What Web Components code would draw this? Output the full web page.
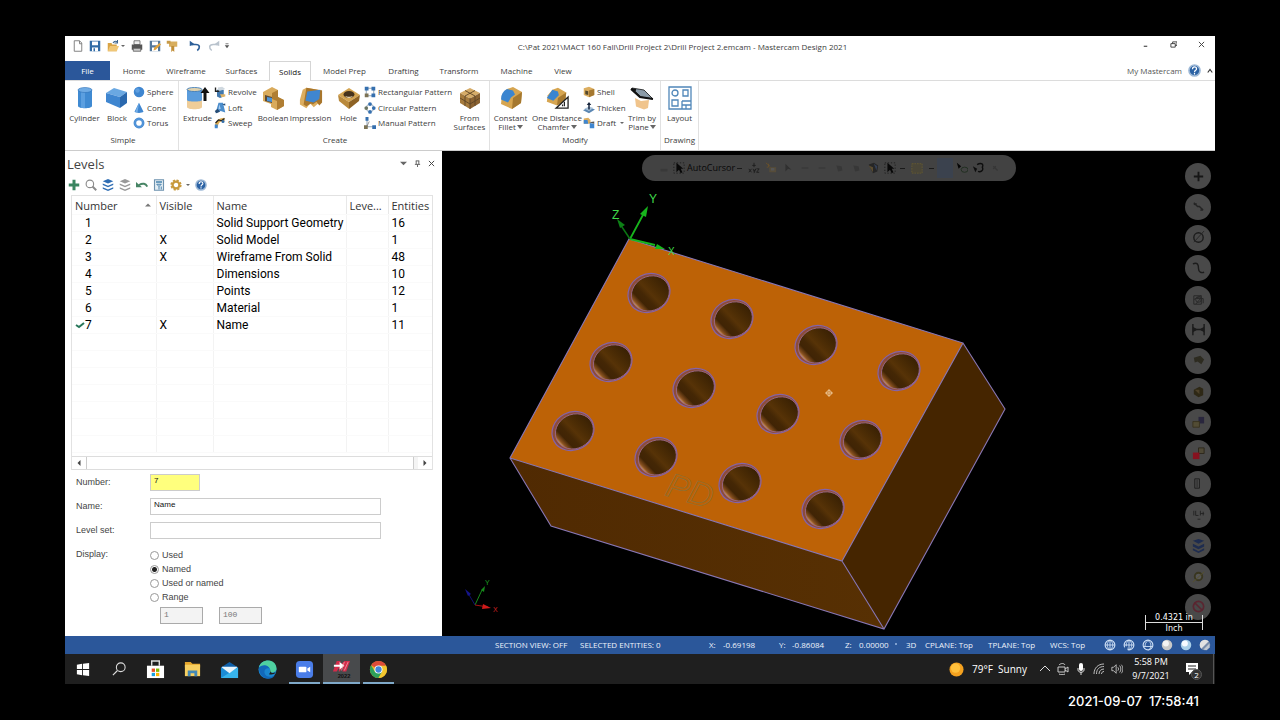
<!DOCTYPE html>
<html lang="en">
<head>
<meta charset="utf-8">
<title>Mastercam Design 2021</title>
<style>
html,body{margin:0;background:#000}
body{font-family:"Open Sans","Noto Sans",sans-serif;font-size:8px;color:#3c3c3c}
</style>
</head>
<body>
<mc-app></mc-app>
<script>
const box=(t,l,r,x='')=>`<path fill="${t}" d="M12 2l10 5-10 5.500L2 7z"/><path fill="${l}" d="M2 7l10 5.500V23L2 17z"/><path fill="${r}" d="M22 7l-10 5.500V23l10-6z"/>${x}`;
const globe='<circle cx="8" cy="8" r="6.500" fill="none" stroke="#cfe0f5" stroke-width="1.500"/><path d="M1.500 8h13M8 1.500v13M8 1.500c-5 4-5 9 0 13M8 1.500c5 4 5 9 0 13" fill="none" stroke="#cfe0f5" stroke-width="1.200"/>';
const ICONS={
// ribbon, large
cylinder:['0 0 24 24','<path fill="#3f8ad2" d="M5 4v16c0 3 14 3 14 0V4z"/><path fill="#5b9fe0" d="M8 5v17h4V5z"/><ellipse cx="12" cy="4" rx="7" ry="2.500" fill="#6fabe4" stroke="#2f72b8" stroke-width=".6"/>'],
block:['0 0 24 24','<path fill="#6aa8e2" d="M9 2l13 4-7 5L1 7z"/><path fill="#3f86d0" d="M1 7l14 4v11L1 16z"/><path fill="#2a68ae" d="M22 6l-7 5v11l7-5z"/>'],
extrude:['0 0 24 24','<path fill="#efcd98" d="M1 13v8c0 3 15 3 15 0v-8z"/><path fill="#5a9cdc" d="M1 3v11c0 2 15 2 15 0V3z"/><ellipse cx="8.500" cy="3.500" rx="7.500" ry="2" fill="#e2d3ae" stroke="#2f72b8" stroke-width=".8"/><path fill="#111" d="M19 1l4.500 6H20.500v8h-3V7H14.500z"/>'],
boolean:['0 0 24 24','<path fill="#d9ab5c" d="M2 6l9-5 6 3v7l6 3v6l-7 4-6-3v-3l-8-3z"/><path fill="#b07e33" d="M17 4v7l6 3v6l-7 4v-9l-5-2V7z"/><path fill="#5b4a35" d="M4 9l7 2v6l-7-2z"/><path fill="#4a94dc" d="M6 11l5 1v4l-5-1z"/>'],
impression:['0 0 26 24','<path fill="#dcae60" d="M1 14L4 3l4-2 17 3-3 4v9l-6 5-4-4-4 5-7-4z"/><path fill="#a8762c" d="M8 1l17 3v13l-3 3-3-4-4 3-2-1-5 3-3-2z"/><path fill="#3f86d0" d="M9 5l14-2-1 10-6 4-9-2z"/>'],
hole:['0 0 24 24','<path fill="#d4a552" d="M12 2l11 7-11 7L1 9z"/><path fill="#b9893c" d="M1 9l11 7v7L2 15z"/><path fill="#8e6324" d="M23 9l-11 7v7l10-8z"/><ellipse cx="12" cy="8.500" rx="5.500" ry="3.500" fill="#46331c"/><path fill="#f5e2bd" d="M8 10c2 2.500 6 2.500 8 0-2 1-6 1-8 0z"/>'],
from:['0 0 24 24',box('#d6ac68','#a57a3c','#8a6231','<path d="M7 4.500l10 5.500v10M17 4.500L7 10v10M2 12l10 6 10-6M12 12v11" fill="none" stroke="#5d4526" stroke-width=".9"/>')],
fillet:['0 0 24 24','<path fill="#d6a550" d="M8 3l6-2 9 5-1 11-9 6-11-5 1-9z"/><path fill="#a5782f" d="M23 6l-9 6-1 11 9-6z"/><path fill="#3a85d0" d="M8 3l6 1.500 2 4-4 3-3 5-7-3c0-5 2-8.500 6-10.500z"/>'],
chamfer:['0 0 26 24','<path fill="#d6a550" d="M8 3l6-2 9 5-1 9-9 5-11-4 1-7z"/><path fill="#a5782f" d="M23 6l-9 6-1 8 9-5z"/><path fill="#3a85d0" d="M8 3l6 2 1 4-6 6-7-3z"/><path fill="#fff" stroke="#222" stroke-width="1.400" d="M25 11v12H12z"/><path d="M21 16v5M19 19v2" stroke="#222" stroke-width="1.300"/>'],
trim:['0 0 24 24','<path fill="#f0c48c" d="M5 12l6 3 8-1-1 8-4 1.500-8-3z"/><path fill="#8b9ba8" stroke="#111" stroke-width=".8" d="M2 2l12 2 9 9-12-2z"/><path d="M1 3l5 1M1 3l9 8 13 2" stroke="#111" stroke-width="2" fill="none"/>'],
layout:['0 0 24 24','<g fill="none" stroke="#5087b9" stroke-width="1.300"><path d="M1 1h22v22H1z"/><circle cx="7" cy="7" r="3"/><path d="M15 4h5v6h-5zM4 14h6v6H4zM14 15h9M14 19h9M14 15v8M18 19v4"/></g>'],
// ribbon, small
sphere:['0 0 16 16','<circle cx="8" cy="8" r="7" fill="#3f86d0"/><circle cx="6" cy="6" r="3" fill="#5f9fe0"/>'],
cone:['0 0 16 16','<path fill="#3f86d0" d="M8 1l6 12c-2 2-10 2-12 0z"/><path fill="#76b0e8" d="M8 1L6 14l-3-1z"/>'],
torus:['0 0 16 16','<circle cx="8" cy="8" r="5.500" fill="none" stroke="#3f86d0" stroke-width="3.500"/><circle cx="8" cy="8" r="5.500" fill="none" stroke="#6ba8e4" stroke-width="1"/>'],
revolve:['0 0 16 16','<path fill="#4178ae" d="M4 5h9v9l-5 2-4-2z"/><path fill="#cfd8df" d="M5 2l6-1 4 3-9 3z"/><path d="M2 2v5h5" stroke="#222" stroke-width="1.800" fill="none"/><path fill="#e0b468" d="M8 11h7v3l-5 1z"/>'],
loft:['0 0 16 16','<path fill="#4b8dcc" d="M6 1h6l3 13-6-2-7 3z"/><path fill="#274d76" d="M1 12l4-3 3 4-5 2zM11 3l4-1v3z"/><path fill="#a9cdee" d="M7 3l2 6-3 1z"/>'],
sweep:['0 0 16 16','<path d="M3 13c1-8 4-9 11-10" stroke="#dba94c" stroke-width="4" fill="none"/><path d="M2 8l4-4 4 1M10 5l4-3" stroke="#222" stroke-width="1.600" fill="none"/><circle cx="12" cy="6" r="2" fill="#356ea8"/><path fill="#3f86d0" d="M1 10h4v5H1z"/>'],
rect:['0 0 16 16','<path d="M3 3h10v10H3z" fill="none" stroke="#6f8aa3"/><path fill="#356fae" d="M1 1h5v5H1zM10 1h5v5h-5zM10 10h5v5h-5z"/><path fill="#7c7355" d="M1 10h5v5H1z"/>'],
circ:['0 0 16 16','<circle cx="8" cy="8" r="5" fill="none" stroke="#7a94ab"/><g fill="#356fae"><circle cx="8" cy="2.800" r="2.500"/><circle cx="13" cy="8" r="2.500"/><circle cx="8" cy="13.200" r="2.500"/></g><circle cx="3" cy="8" r="2.500" fill="#6a7563"/>'],
manual:['0 0 16 16','<path d="M4 3v10h9" fill="none" stroke="#6f8aa3"/><path fill="#356fae" d="M2 0h4v5H2zM11 11h5v5h-5z"/><path fill="#7c7355" d="M0 11h5v5H0z"/><path d="M4 12L7 6" stroke="#777"/>'],
shell:['0 0 16 16','<path fill="#dcae60" d="M1 3l7-2 7 3v8l-7 3-7-3z"/><path fill="#a5782f" d="M8 6l7-2v8l-7 3z"/><path fill="#54482c" d="M3 6l4 1v5l-4-1z"/>'],
thicken:['0 0 16 16','<path fill="#5b87b3" d="M0 11l8-4 8 3-8 5z"/><path fill="#a9c2d8" d="M2 9l6-3 6 2-6 4z"/><path fill="#17253c" d="M8 0l3 4H9v6H7V4H5z"/>'],
draft:['0 0 16 16','<path fill="#dcae60" d="M1 2l6-1 3 3v5H1z"/><path fill="#3f86d0" d="M1 4h5l1 5H1zM9 8l6 1v6H9z"/><path fill="#555" d="M8 7l7-1v3z"/>'],
// quick access
new:['0 0 16 16','<path d="M3 1h7l3 3v11H3zM10 1v4h3" fill="#fff" stroke="#777" stroke-width="1.200"/>'],
save:['0 0 16 16','<path d="M1 1h14v14H1z" fill="#316ba5"/><path d="M4 2h8v5H4zM4 10h8v5H4z" fill="#fff"/><path d="M6 11h2v4H6z" fill="#316ba5"/>'],
open:['0 0 16 16','<path d="M1 4h5l1 2h6v9H1z" fill="#d9a445"/><path d="M4 8h12l-3 7H1z" fill="#f0c777"/><path d="M8 4c2-3 4-3 6-1M14 0v4h-4" stroke="#3c648d" stroke-width="1.400" fill="none"/>'],
print:['0 0 16 16','<path d="M4 1h8v5H4z" fill="#eee" stroke="#555"/><path d="M1 6h14v7H1z" fill="#555"/><path d="M3 11h10v4H3z" fill="#c9c9c9" stroke="#555"/>'],
saveas:['0 0 16 16','<path d="M1 1h14v14H1z" fill="#54789c"/><path d="M4 2h8v5H4zM4 10h8v5H4z" fill="#fff"/><path d="M6 14l1-4 7-6 2 2-7 7z" fill="#dfa23d"/>'],
pin2:['0 0 16 16','<path d="M4 2h11v7H4z" fill="#d8ae5e"/><path d="M7 8h4v8l-2-2-2 2z" fill="#c08d36"/><path d="M1 1h5v4H1z" fill="#c79a48"/>'],
undo:['0 0 16 16','<path d="M4 6h5c6 0 6 5 2 8" fill="none" stroke="#2c5f99" stroke-width="2.200"/><path d="M1 8V1l7 5z" fill="#2c5f99"/>'],
redo:['0 0 16 16','<path d="M12 6H7C1 6 1 11 5 14" fill="none" stroke="#b9c3cd" stroke-width="2"/><path d="M15 8V1L8 6z" fill="#b9c3cd"/>'],
custom:['0 0 8 8','<path d="M2 1h4" stroke="#555"/><path d="M1 3h6L4 7z" fill="#555"/>'],
down:['0 0 8 8','<path d="M0 2h8L4 6z" fill="#666"/>'],
up:['0 0 8 8','<path d="M0 6h8L4 2z" fill="#777"/>'],
left:['0 0 8 8','<path d="M6 0v8L2 4z" fill="#444"/>'],
right:['0 0 8 8','<path d="M2 0v8l4-4z" fill="#444"/>'],
min:['0 0 8 8','<path d="M2 6h4" stroke="#333" stroke-width="1.200"/>'],
restore:['0 0 8 8','<path d="M1 3h5v4H1zM3 3V1h5v4H6" fill="none" stroke="#333"/>'],
x:['0 0 8 8','<path d="M1 1l6 6M7 1L1 7" stroke="#444" stroke-width="1.100"/>'],
chev:['0 0 8 8','<path d="M1 6l3-4 3 4" fill="none" stroke="#333" stroke-width="1.500"/>'],
help:['0 0 16 16','<circle cx="8" cy="8" r="6.800" fill="#2b62a4" stroke="#9db8d6" stroke-width="2"/><path d="M5.500 6.500c0-4 5-3.500 5-.5 0 2-2.500 1.500-2.500 4M8 11v1.800" stroke="#fff" stroke-width="1.500" fill="none"/>'],
pin:['0 0 8 8','<path d="M2 1h4M2.500 1v4M5.500 1v4M1 5h6M4 5v3" stroke="#555" fill="none"/>'],
// levels toolbar
plus:['0 0 16 16','<path d="M6 1h4v5h5v4h-5v5H6v-5H1V6h5z" fill="#3a8560"/>'],
find:['0 0 16 16','<circle cx="6.500" cy="6.500" r="5" fill="#fff" stroke="#8b8b8b" stroke-width="1.500"/><path d="M10 10l5 5" stroke="#8b8b8b" stroke-width="2.500"/>'],
layers:['0 0 16 16','<g fill="#2f6db3"><path d="M8 0l7 3-7 3-7-3z"/><path d="M1 6l7 3 7-3v2l-7 3-7-3zM1 11l7 3 7-3v2l-7 3-7-3z"/></g>'],
layersg:['0 0 16 16','<g fill="#999"><path d="M8 0l7 3-7 3-7-3z"/><path d="M1 6l7 3 7-3v2l-7 3-7-3zM1 11l7 3 7-3v2l-7 3-7-3z"/></g>'],
back:['0 0 16 16','<path d="M4 8c5-3 9-2 11 2" stroke="#468464" stroke-width="2.500" fill="none"/><path d="M0 11V4l8 7z" fill="#468464"/>'],
calc:['0 0 16 16','<path d="M2 1h12v14H2z" fill="#e4edf3" stroke="#6e92ae" stroke-width="1.500"/><path d="M4 3h8v2H4z" fill="#4682ad"/><path d="M5 7h6L8 10zM8 10v4M11 10v4" fill="none" stroke="#4682ad" stroke-width="1.300"/>'],
gear:['0 0 16 16','<circle cx="8" cy="8" r="4.500" fill="none" stroke="#c89a3c" stroke-width="3"/><circle cx="8" cy="8" r="6.500" fill="none" stroke="#c89a3c" stroke-width="2" stroke-dasharray="3 2.100"/>'],
check:['0 0 10 10','<path d="M1 5l3 2 5-4" fill="none" stroke="#28775a" stroke-width="2"/>'],
// status bar
g1:['0 0 16 16',globe],g2:['0 0 16 16',globe+'<path d="M1 12l5-3v7z" fill="#2b5797"/>'],
g3:['0 0 16 16','<circle cx="8" cy="8" r="6.500" fill="none" stroke="#cfe0f5" stroke-width="1.500"/><path d="M2 10h12M8 2c5 3 5 9 1 13M8 2c-3 2-4 5-4 8" fill="none" stroke="#cfe0f5" stroke-width="1.200"/>'],
b1:['0 0 16 16','<circle cx="8" cy="8" r="7" fill="#c8c8c8"/><circle cx="6.500" cy="6" r="4" fill="#f3f3f3"/>'],
b2:['0 0 16 16','<circle cx="8" cy="8" r="7" fill="#a9cfe8"/><circle cx="6.500" cy="6" r="4" fill="#f7fbff"/>'],
b3:['0 0 16 16','<circle cx="8" cy="8" r="7" fill="#788caa"/><path d="M3 13A7 7 0 0113 3z" fill="#e2e2e2"/><path d="M6 14l8-8v5l-4 4z" fill="#bfc7d1"/>'],
// task bar
win:['0 0 16 16','<path fill="#fff" d="M1 3l6-1v6H1zM8 2l7-1v7H8zM1 9h6v6l-6-1zM8 9h7v7l-7-1z"/>'],
search:['0 0 16 16','<circle cx="10" cy="6" r="5" fill="none" stroke="#ddd" stroke-width="1.200"/><path d="M6 10l-5 5" stroke="#ddd" stroke-width="1.300"/>'],
store:['0 0 20 20','<path fill="#fff" d="M1 6h18v13H1z"/><path d="M6 6V1h8v5" fill="none" stroke="#ddd" stroke-width="1.500"/><path fill="#e74f25" d="M6 9h3.500v3.500H6z"/><path fill="#7fba00" d="M10.500 9H14v3.500h-3.500z"/><path fill="#1aa0e0" d="M6 13.500h3.500V17H6z"/><path fill="#fbb600" d="M10.500 13.500H14V17h-3.500z"/>'],
files:['0 0 20 20','<path fill="#e5a62c" d="M2 2h6l2 2h8v4H2z"/><path fill="#f8d061" d="M2 5h16v12H2z"/><path fill="#4388b5" d="M5 11h10v6h-3v-3H8v3H5z"/>'],
mail:['0 0 20 20','<path fill="#0d5ea8" d="M1 8l9-6 9 6v4H1z"/><path fill="#1b8cd6" d="M1 8h18v11H1z"/><path fill="#37b4ec" d="M1 19L19 8v11z"/><path fill="#e8f3fa" d="M2 7h16v1l-8 6-8-6z"/>'],
edge:['0 0 20 20','<circle cx="10" cy="10" r="9.500" fill="#1a86d0"/><path d="M1 8C3-2 19-2 19.500 9c0 5-7 5-7 3 2-5-6-8-11.500-4z" fill="#4fd0a0"/><path d="M1 8c4-4 10-3 11 1-3-1-6 1-5 5 1 4 7 5 11 2-5 7-17 4-17-8z" fill="#1268ba"/><path d="M12.500 9c1 4 0 5-1 6 3 1 6 0 7-2-2 1-4 1-5 0z" fill="#1f1f1f"/>'],
zoom:['0 0 20 20','<rect x="1" y="1" width="18" height="18" rx="4" fill="#4a7de8"/><rect x="4" y="7" width="8" height="6" rx="1" fill="#fff"/><path d="M13 9l3-2v6l-3-2z" fill="#fff"/>'],
mcam:['0 0 20 20','<path d="M1 12L5 1h4l-1 5 5-5h6l-4 11h-4l1-5-4 5H7l1-5-3 5z" fill="#d42c4a"/><path d="M2 5h6V2l5 4-5 4V7H2z" fill="#fff"/><path d="M13 2l-3 9M17 2l-4 9" stroke="#e9a5b0" stroke-width=".8"/><text x="6" y="19" font-size="6" font-weight="700" font-family="Liberation Sans,sans-serif" fill="#111">2022</text>'],
chrome:['0 0 20 20','<circle cx="10" cy="10" r="9" fill="#e4b927"/><path d="M10 10L2.200 5.500A9 9 0 0117.800 5.500z" fill="#dd4b39"/><path d="M2.200 5.500A9 9 0 0010 19l4-7H6z" fill="#2da05a"/><path d="M10 6h8a9 9 0 01-8 13l4-7z" fill="#f2c62f"/><circle cx="10" cy="10" r="4.200" fill="#fff"/><circle cx="10" cy="10" r="3.300" fill="#4285d8"/>'],
sun:['0 0 16 16','<circle cx="8" cy="8" r="7.500" fill="#f4a11f"/><circle cx="7" cy="6.500" r="5" fill="#ffc03c"/>'],
tchev:['0 0 12 12','<path d="M1 8l5-5 5 5" fill="none" stroke="#ddd"/>'],
cam:['0 0 12 12','<path d="M1 4h7v5H1zM8 6l3-2v5L8 7M2 2c2-2 5-2 6 0M2 11c2 1 4 1 6 0" fill="none" stroke="#ccc"/>'],
mic:['0 0 12 12','<rect x="4" y="0" width="4" height="8" rx="2" fill="#fff"/><path d="M3 5v2c0 3 6 3 6 0V5M6 9v3" stroke="#ddd" fill="none"/>'],
wifi:['0 0 12 12','<path d="M1 11C1 5 5 1 11 1M3.500 11c0-5 3-7.500 7.500-7.500M6 11c0-3 2-5 5-5M8.500 11c0-1.500 1-2.500 2.500-2.500" fill="none" stroke="#bbb"/>'],
sound:['0 0 14 12','<path d="M1 4h2l3-3v10L3 8H1zM8 4c1 1 1 3 0 4M10 2c2 2 2 6 0 8M12 1c2.500 3 2.500 7 0 10" fill="none" stroke="#ccc"/>'],
note:['0 0 14 14','<path fill="#fff" d="M1 1h12v9H7l-3 3v-3H1z"/><path d="M3 4h8M3 7h8" stroke="#222"/>'],
// selection bar
lock:['0 0 14 14','<path d="M3 8h8v3H3z" fill="#393939"/>'],
cursor:['0 0 14 14','<path d="M1 1h12v12H1z" fill="none" stroke="#1c1c1c" stroke-dasharray="1.500 2"/><path d="M4 1v11l3-3 2 4 2-1-2-4h3z" fill="#080808"/>'],
xyz:['0 0 14 14','<path d="M7 1v5M5 4h4M1 8l3 4M4 8l-3 4M6 8l1 3 2-3-2 5M10 8h3l-3 4h3" stroke="#1c1c1c" fill="none" stroke-width="1"/>'],
snap:['0 0 14 14','<path d="M1 1l5 4M4 2v4H2" stroke="#6a522a" fill="none"/><path d="M5 6h8v6H5z" fill="#564c39"/><path d="M7 7h4v3H7z" fill="#555"/>'],
arr:['0 0 14 14','<path d="M4 2v9l3-3 4 1z" fill="#303030"/>'],
dim:['0 0 14 14','<path d="M3 7h8" stroke="#3b3b3b" stroke-width="2"/>'],
blob:['0 0 14 14','<path d="M4 4l6 1 1 5-5 1z" fill="#373737"/>'],
far:['0 0 14 14','<path d="M5 5l5 5M5 8l3-3" stroke="#363636" stroke-width="1.500"/>'],
solid:['0 0 14 14','<path d="M2 3l6-2 5 3-1 7-5 2z" fill="#262626"/><path d="M2 4l5 2v6z" fill="#5a4c30"/><path d="M8 2l4 3-1 5z" fill="#354056"/>'],
marq:['0 0 14 14','<path d="M1 2h12v11H1z" fill="#4a4638" stroke="#665b30" stroke-dasharray="2 1"/>'],
blue:['0 0 20 20','<path d="M2 0h16v20H2z" fill="#3b424e"/>'],
lasso:['0 0 14 14','<path d="M1 1l2 7 3-3z" fill="#050505"/><ellipse cx="10" cy="9" rx="4" ry="3" fill="none" stroke="#1d2c1d"/>'],
inv:['0 0 14 14','<path d="M1 5l3 7 2-4z" fill="#0d0d0d"/><path d="M6 3c5-3 8 0 6 3 2 4-2 6-5 5" fill="none" stroke="#0d0d0d" stroke-width="1.600"/>'],
// quick masks
qplus:['0 0 16 16','<path d="M8 3v10M3 8h10" stroke="#161616" stroke-width="2"/>'],
qline:['0 0 16 16','<path d="M3 4l4 4 2 0 4 4M3 6l3-1M10 12l3-1" stroke="#242424" stroke-width="1.500" fill="none"/>'],
qarc:['0 0 16 16','<circle cx="8" cy="8" r="5" fill="none" stroke="#1c1c1c" stroke-width="1.500"/><path d="M3 13L14 1" stroke="#262626"/>'],
qspl:['0 0 16 16','<path d="M2 3c5-2 6 1 6 5s3 5 6 4" fill="none" stroke="#1c1c1c" stroke-width="1.500"/>'],
qwire:['0 0 16 16','<path d="M3 4h8v9H3zM3 8l8-4M5 13l6-7M6 7h7v5" fill="none" stroke="#282828"/><circle cx="8" cy="8" r="3" fill="none" stroke="#282828"/>'],
qdim:['0 0 16 16','<path d="M2 2v12M14 2v12M3 8h10" stroke="#1b1b1b" stroke-width="1.500"/><path d="M2 5l5 3-5 3zM14 5L9 8l5 3z" fill="#1b1b1b"/>'],
qsurf:['0 0 16 16','<path d="M3 5l7-2 4 4-3 5-4-3-3 1z" fill="#2d2b20"/>'],
qsol:['0 0 16 16','<path d="M3 6l6-3 4 2v7l-5 2-5-3z" fill="#2e2816"/><path d="M4 6h5v5z" fill="#4d4129"/>'],
qtwo:['0 0 16 16','<path d="M8 2h6v7H8z" fill="#29263d"/><path d="M2 7h7v6H2z" fill="#524c35" stroke="#39321f"/>'],
qred:['0 0 16 16','<path d="M8 2h6v6H8z" fill="#4e4835" stroke="#2d281c"/><path d="M2 7h7v7H2z" fill="#86121f"/>'],
qrec:['0 0 16 16','<path d="M4 3h5v10H4z" fill="none" stroke="#1e1e1e"/><path d="M6.500 4v8" stroke="#2a2a2a"/>'],
qpts:['0 0 16 16','<path d="M3 4v5M5 4v5h3M10 4v5M13 5v4M7 13h3M10 7h4" stroke="#222" fill="none"/>'],
qlay:['0 0 16 16','<path d="M8 1l6 2-6 3-6-3zM2 6l6 3 6-3v3l-6 3-6-3zM2 11l6 3 6-3v2l-6 3-6-3z" fill="#1e2c4f"/>'],
qcol:['0 0 16 16','<circle cx="8" cy="8" r="4" fill="#555" stroke="#39361f" stroke-width="2"/><path d="M2 14L14 3" stroke="#55502a"/>'],
qno:['0 0 16 16','<circle cx="8" cy="8" r="5.500" fill="none" stroke="#5a2530" stroke-width="1.800"/><path d="M4 4l8 8" stroke="#5a2530" stroke-width="1.800"/>']
};
const define=(name,html)=>customElements.define(name,class extends HTMLElement{
  connectedCallback(){
    if(this.shadowRoot)return;
    this.attachShadow({mode:'open'}).innerHTML=typeof html==='function'?html(this):html;
  }
});
const reset='button{font:inherit;color:inherit;background:none;border:0;padding:0;margin:0}a{color:inherit;text-decoration:none}';

define('mc-icon',el=>{
  const [vb,body]=ICONS[el.getAttribute('name')];
  return `<style>:host{display:block;flex:none;width:var(--s,12px);height:var(--s,12px)}svg{display:block;width:100%;height:100%}</style><svg viewBox="${vb}" aria-hidden="true">${body}</svg>`;
});

define('mc-titlebar',`<style>
:host{display:flex;height:25px;background:#fff}${reset}
nav{display:flex;width:173px;align-items:center;box-sizing:border-box;padding:0 0 6px 6px}
nav button{width:19px;display:grid;place-items:center}nav .n{width:6px;--s:4px}
h1{flex:1;margin:0;text-align:center;font-size:8px;font-weight:400;white-space:nowrap;line-height:22px}
.w{width:88px;display:flex;padding:0 0 8px 4px;--s:7px;box-sizing:border-box}
.w button{width:28px;display:grid;place-items:center}
</style><nav aria-label="Quick access">
<button style="width:13px"><mc-icon name="new"></mc-icon></button>
<button style="width:22px"><mc-icon name="save"></mc-icon></button>
<button style="width:14px"><mc-icon name="open"></mc-icon></button>
<button class="n"><mc-icon name="down"></mc-icon></button>
<button style="width:22px"><mc-icon name="print"></mc-icon></button>
<button style="width:14px"><mc-icon name="saveas"></mc-icon></button>
<button style="width:20px"><mc-icon name="pin2"></mc-icon></button>
<button style="width:26px"><mc-icon name="undo"></mc-icon></button>
<button style="width:9px"><mc-icon name="redo"></mc-icon></button>
<button style="width:19px;--s:6px"><mc-icon name="custom"></mc-icon></button></nav>
<h1>C:\\Pat 2021\\MACT 160 Fall\\Drill Project 2\\Drill Project 2.emcam - Mastercam Design 2021</h1>
<div class="w"><button aria-label="Minimize"><mc-icon name="min"></mc-icon></button><button aria-label="Restore"><mc-icon name="restore"></mc-icon></button><button aria-label="Close"><mc-icon name="x"></mc-icon></button></div>`);

define('mc-tabs',`<style>
:host{display:flex;height:20px;background:#fff;border-bottom:1px solid #dcdcdc;box-sizing:border-box}${reset}
button{width:var(--w);white-space:nowrap;text-align:center;box-sizing:border-box;line-height:18px}
.file{background:#2b579a;color:#fff}
.on{border:1px solid #d5d5d5;border-bottom:0;color:#111;height:20px;background:#fff}
.r{margin-left:auto;display:flex;align-items:center;gap:6px;color:#555;padding-right:2px}
</style>
<button class="file" style="--w:45px">File</button><button style="--w:48px">Home</button><button style="--w:56px">Wireframe</button><button style="--w:55px">Surfaces</button><button class="on" style="--w:42px">Solids</button><button style="--w:67px">Model Prep</button><button style="--w:51px">Drafting</button><button style="--w:60px">Transform</button><button style="--w:55px">Machine</button><button style="--w:38px">View</button>
<div class="r"><a href="#my">My Mastercam</a><mc-icon name="help" style="--s:13px"></mc-icon><mc-icon name="chev" style="--s:6px"></mc-icon></div>`);

define('mc-group',el=>`<style>
:host{display:flex;flex-direction:column;border-right:1px solid #e1e1e1;box-sizing:border-box;height:69px}
.b{display:flex;flex:1}.t{text-align:center;line-height:16px;padding-bottom:2px}
</style><div class="b"><slot></slot></div><div class="t">${el.getAttribute('label')}</div>`);

define('mc-big',el=>`<style>
:host{display:block;width:var(--w);flex:none}${reset}
button{width:100%;display:flex;flex-direction:column;align-items:center;padding-top:5px;line-height:9px;--s:24px}
.l{margin-top:3px;white-space:nowrap;text-align:center}.l div{display:flex;align-items:center;justify-content:center}
i{display:inline-block;border:3px solid transparent;border-top:4px solid #666;border-bottom:0;margin-left:1px}
</style><button><mc-icon name="${el.getAttribute('icon')}"></mc-icon><div class="l">${el.getAttribute('label').split('|').map((t,i,a)=>`<div>${t}${i===a.length-1&&el.hasAttribute('menu')?'<i></i>':''}</div>`).join('')}</div></button>`);

define('mc-list',el=>`<style>
:host{display:flex;flex-direction:column;width:var(--w);flex:none;padding-top:3px}${reset}
button{display:flex;height:15px;align-items:center;gap:2px;white-space:nowrap;margin-bottom:1px}button+button{margin-bottom:0}
mc-icon{--s:12px}i{border:2px solid transparent;border-top:2px solid #666;border-bottom:0;margin-left:2px}
</style>${el.getAttribute('items').split(',').map(s=>{const [n,t,m]=s.split(':');return `<button><mc-icon name="${n}"></mc-icon><span>${t}</span>${m?'<i></i>':''}</button>`}).join('')}`);

define('mc-ribbon',`<style>
:host{display:flex;background:#fff;border-bottom:1px solid #ccc;height:69px}
mc-group{padding-left:var(--p,0)}
</style>
<mc-group label="Simple" style="width:114px;--p:3px"><mc-big icon="cylinder" label="Cylinder" style="--w:33px"></mc-big><mc-big icon="block" label="Block" style="--w:32px"></mc-big><mc-list items="sphere:Sphere,cone:Cone,torus:Torus" style="--w:44px"></mc-list></mc-group>
<mc-group label="Create" style="width:311px;--p:2px"><mc-big icon="extrude" label="Extrude" style="--w:33px"></mc-big><mc-list items="revolve:Revolve,loft:Loft,sweep:Sweep" style="--w:44px"></mc-list><mc-big icon="boolean" label="Boolean" style="--w:30px"></mc-big><mc-big icon="impression" label="Impression" style="--w:45px"></mc-big><mc-big icon="hole" label="Hole" style="--w:31px"></mc-big><mc-list items="rect:Rectangular Pattern,circ:Circular Pattern,manual:Manual Pattern" style="--w:89px"></mc-list><mc-big icon="from" label="From|Surfaces" style="--w:33px"></mc-big></mc-group>
<mc-group label="Modify" style="width:171px"><mc-big icon="fillet" label="Constant|Fillet" menu style="--w:41px"></mc-big><mc-big icon="chamfer" label="One Distance|Chamfer" menu style="--w:52px"></mc-big><mc-list items="shell:Shell,thicken:Thicken,draft:Draft:1" style="--w:41px"></mc-list><mc-big icon="trim" label="Trim by|Plane" menu style="--w:36px"></mc-big></mc-group>
<mc-group label="Drawing" style="width:38px"><mc-big icon="layout" label="Layout" style="--w:37px"></mc-big></mc-group>`);

const rows=[[1,'','Solid Support Geometry',16],[2,'X','Solid Model',1],[3,'X','Wireframe From Solid',48],[4,'','Dimensions',10],[5,'','Points',12],[6,'','Material',1],[7,'X','Name',11]];
define('mc-table',`<style>
:host{display:flex;flex-direction:column;flex:1;border:1px solid #e2e2e2;border-bottom:0;background:#fff;color:#000;font:12px Roboto,"Noto Sans",sans-serif;min-height:0;overflow:hidden}${reset}
table{border-collapse:collapse;table-layout:fixed;width:100%}
th,td{padding:0 0 0 3px;text-align:left;font-weight:400;line-height:16px;height:16px;border-right:1px solid #f3f3f3;border-bottom:1px solid #fafafa;white-space:nowrap}
th{color:#333;height:18px;line-height:18px;font:11px "Open Sans","Noto Sans",sans-serif;border-right-color:#e8e8e8}th:last-child,td:last-child{border-right:0}
.n{display:flex;align-items:center}.n mc-icon{--s:10px;visibility:hidden}.n.on mc-icon{visibility:visible}
th .h{display:flex;justify-content:space-between;align-items:center;padding-right:5px;--s:6px}
.sb{margin-top:auto;display:flex;height:12px;background:#f4f4f4;border-top:1px solid #ddd;border-bottom:1px solid #ddd;flex:none;--s:6px}
.sb button{width:14px;display:grid;place-items:center;background:#fff}.sb span{flex:1;background:#fff;border:solid #ccc;border-width:0 1px;margin-right:4px}
</style><table><colgroup><col style="width:84px"><col style="width:57px"><col style="width:133px"><col style="width:42px"><col></colgroup>
<thead><tr><th><div class="h">Number<mc-icon name="up"></mc-icon></div></th><th>Visible</th><th>Name</th><th>Leve...</th><th>Entities</th></tr></thead>
<tbody>${rows.map(r=>`<tr><td><div class="n${r[0]===7?' on':''}"><mc-icon name="check"></mc-icon>${r[0]}</div></td><td>${r[1]}</td><td>${r[2]}</td><td></td><td>${r[3]}</td></tr>`).join('')}${'<tr><td></td><td></td><td></td><td></td><td></td></tr>'.repeat(7)}</tbody></table>
<div class="sb"><button aria-label="Scroll left"><mc-icon name="left"></mc-icon></button><span></span><button aria-label="Scroll right"><mc-icon name="right"></mc-icon></button></div>`);

define('mc-levels',`<style>
:host{display:flex;flex-direction:column;width:377px;background:#fff;box-sizing:border-box;padding-bottom:12px}${reset}
header{display:flex;align-items:center;height:25px;padding:0 7px 0 2px;--s:7px}
h2{font-size:13px;font-weight:400;margin:0;flex:1;color:#444}header mc-icon{margin-left:7px}
.tb{display:flex;height:18px;align-items:center;--s:12px}.tb button{width:17px;display:grid;place-items:center;height:16px}
.tb .n{width:8px;--s:4px}
mc-table{margin:1px 9px 0 6px}
form{font-family:"Liberation Sans",sans-serif;font-size:9px;color:#444;padding-left:11px}
.f{display:grid;grid-template-columns:74px 231px;height:24px;align-items:center}
input{font:8px "Liberation Sans",sans-serif}
input:not([type=radio]){height:17px;box-sizing:border-box;border:1px solid #ccc;padding:0 3px 3px;width:100%;margin:0;color:#111;background:#fff}
.f input.y{width:50px;background:#ffff7d}
.d{display:grid;grid-template-columns:74px 231px;line-height:24px}
fieldset{border:0;margin:0;padding:6px 0 0;line-height:12px}
fieldset label{display:flex;align-items:center;gap:3px;height:14px}
input[type=radio]{appearance:none;width:9px;height:9px;border:1px solid #999;border-radius:50%;margin:0;background:#fff;box-sizing:border-box}
input[type=radio]:checked{background:radial-gradient(#222 0 2px,#fff 3px)}
.r{display:flex;gap:16px;padding:3px 0 0 10px}.r input:not([type=radio]){width:43px;background:#f3f3f3;color:#777;font-family:"Liberation Mono",monospace;border-color:#aaa}
</style>
<header><h2>Levels</h2><mc-icon name="down"></mc-icon><mc-icon name="pin"></mc-icon><mc-icon name="x"></mc-icon></header>
<div class="tb">${['plus','find','layers','layersg','back','calc','gear'].map(n=>`<button aria-label="${n}"><mc-icon name="${n}"></mc-icon></button>`).join('')}<button class="n" aria-label="more"><mc-icon name="down"></mc-icon></button><button aria-label="help"><mc-icon name="help"></mc-icon></button></div>
<mc-table></mc-table>
<form><div class="f"><label for="a">Number:</label><input id="a" class="y" value="7"></div>
<div class="f"><label for="b">Name:</label><input id="b" value="Name"></div>
<div class="f"><label for="c">Level set:</label><input id="c"></div>
<div class="d"><span>Display:</span><fieldset aria-label="Display"><label><input type="radio" name="d">Used</label><label><input type="radio" name="d" checked>Named</label><label><input type="radio" name="d">Used or named</label><label><input type="radio" name="d">Range</label>
<div class="r"><input aria-label="From" value="1" disabled><input aria-label="To" value="100" disabled></div></fieldset></div></form>`);

const holes=[];for(let j=0;j<3;j++)for(let i=0;i<4;i++)holes.push([Math.round(649+83.3*i-38*j),Math.round(293+26*i+69*j)]);
define('mc-scene',`<style>:host{display:block;position:absolute;inset:0}svg{width:100%;height:100%;display:block}text{font-family:"Liberation Sans",sans-serif}</style>
<svg viewBox="442 151 773 485" preserveAspectRatio="xMidYMid meet" role="img" aria-label="Drilled block">
<defs><linearGradient id="h" x1="0" y1=".62" x2="1" y2=".38"><stop offset="0" stop-color="#e0ac80"/><stop offset=".08" stop-color="#8a5220"/><stop offset=".2" stop-color="#402405"/><stop offset=".35" stop-color="#442705"/><stop offset=".5" stop-color="#573307"/><stop offset=".65" stop-color="#4d2d05"/><stop offset="1" stop-color="#382003"/></linearGradient>
<linearGradient id="f" x1="0" y1="0" x2="1" y2="0"><stop offset="0" stop-color="#502a02"/><stop offset="1" stop-color="#573003"/></linearGradient>
<g id="o"><ellipse rx="21.500" ry="19" transform="rotate(-28)" fill="#8d4c38" stroke="#8563a8" stroke-width="1.200"/><ellipse cx="1" cy="1" rx="19.500" ry="17" transform="rotate(-28)" fill="url(#h)" stroke="#9b6a8c" stroke-width=".8"/></g></defs>
<path d="M510 458L842 561L884 629L551 526z" fill="url(#f)"/><path d="M963 343L1005 409L884 629L842 561z" fill="#452500"/><path d="M629 239L963 343L842 561L510 458z" fill="#bd6206"/>
<path d="M629 239L963 343L842 561L510 458zM510 458L551 526L884 629L1005 409L963 343M842 561L884 629" fill="none" stroke="#8877b5" stroke-width="1.100"/>
${holes.map(([x,y])=>`<use href="#o" x="${x}" y="${y}"/>`).join('')}
<text x="664" y="495" font-size="34" font-style="italic" fill="none" stroke="#8a7038" stroke-width=".7" transform="rotate(17 664 495)">PD</text>
<g stroke="#17b51c" stroke-width="1.800" fill="#17b51c"><path d="M630 239L644 213M630 239L655 245"/><path d="M648 206l-2 11-6-3zM665 249l-10 0 2-5z" stroke="none"/></g><path d="M630 239L620 224" stroke="#0b7512" stroke-width="1.500"/><path d="M617 219l8 6-5 3z" fill="#0d8016"/>
<g fill="#3fd94a" font-size="12"><text x="649" y="203">Y</text><text x="612" y="219">Z</text><text x="668" y="255" font-size="10">X</text></g>
<path d="M475 605L482 590" stroke="#168a1b"/><path d="M485 586l-1 6-3-2z" fill="#168a1b"/><path d="M475 605l-7-12" stroke="#10106e"/><path d="M465 589l6 5-3 2z" fill="#15158a"/><path d="M475 605l13 2" stroke="#a01010"/><path d="M491 608l-9 1 1-5z" fill="#cf1a1a"/><g font-size="7"><text x="485" y="585" fill="#1da023">Y</text><text x="493" y="612" fill="#d02020">X</text></g>
<g stroke="#f3d3a8" fill="none" stroke-width=".8"><circle cx="829" cy="393" r="2.500"/><path d="M829 389v8M825 393h8"/></g></svg>`);

define('mc-viewport',`<style>
:host{display:block;position:relative;flex:1;background:#000}${reset}
.bar{position:absolute;top:4px;left:200px;width:374px;height:26px;border-radius:13px;background:#424242;display:flex;align-items:center;box-sizing:border-box;padding-left:14px;color:#080808;--s:12px}
.bar button{width:var(--w,17px);flex:none;display:grid;place-items:center;height:22px}.bar span{font-size:9px;width:48px;flex:none;padding:0 3px 2px 1px;box-sizing:border-box}.bar i{width:5px;height:1px;background:#1a1a1a}.bar>i{margin:0 3px}
.q{position:absolute;right:4px;top:12px;bottom:16px;display:flex;flex-direction:column;justify-content:space-between}
.q button{width:26px;height:26px;border-radius:50%;background:#494949;display:grid;place-items:center;--s:15px}
.sc{position:absolute;right:12px;bottom:6px;width:58px;box-sizing:border-box;text-align:center;color:#fff;font:8px/8px "DejaVu Sans",sans-serif}
.sc div{border:solid #ddd;border-width:0 1px;height:7px}.sc div:first-child{border-bottom-width:1px;line-height:5px}.sc div+div{line-height:11px}
</style><mc-scene></mc-scene>
<div class="bar"><button style="--w:16px"><mc-icon name="lock"></mc-icon></button><button style="--w:14px"><mc-icon name="cursor"></mc-icon></button><span>AutoCursor</span><i></i>
${['xyz','snap','arr','dim','dim','blob','blob','solid','cursor'].map(n=>`<button><mc-icon name="${n}"></mc-icon></button>`).join('')}<button style="--w:9px"><i></i></button><button style="--w:20px"><mc-icon name="marq"></mc-icon></button><button style="--w:8px"><i></i></button><button style="--w:20px;--s:20px"><mc-icon name="blue"></mc-icon></button><button style="--w:14px"><mc-icon name="lasso"></mc-icon></button><button><mc-icon name="inv"></mc-icon></button><button><mc-icon name="far"></mc-icon></button></div>
<div class="q">${['qplus','qline','qarc','qspl','qwire','qdim','qsurf','qsol','qtwo','qred','qrec','qpts','qlay','qcol','qno'].map(n=>`<button aria-label="${n.slice(1)}"><mc-icon name="${n}"></mc-icon></button>`).join('')}</div>
<div class="sc"><div>0.4321 in</div><div>Inch</div></div>`);

define('mc-status',`<style>
:host{display:flex;height:18px;background:#2b579a;color:#eef3fa;align-items:center;white-space:nowrap}
span{width:var(--w);flex:none;padding-bottom:2px}i{display:block;width:2px;height:2px;background:#7fa0cf}
.l{display:flex;flex:1;justify-content:flex-end}.r{display:flex;align-items:center}
.g{display:flex;--s:12px;gap:7px;padding-right:4px}
</style><div class="l"><span style="--w:85px">SECTION VIEW: OFF</span><span style="--w:129px">SELECTED ENTITIES: 0</span></div>
<div class="r"><span style="--w:14px">X:</span><span style="--w:56px">-0.69198</span><span style="--w:13px">Y:</span><span style="--w:53px">-0.86084</span><span style="--w:14px">Z:</span><span style="--w:36px">0.00000</span><span style="--w:11px"><i></i></span><span style="--w:19px">3D</span><span style="--w:63px">CPLANE: Top</span><span style="--w:62px">TPLANE: Top</span><span style="--w:54px">WCS: Top</span></div>
<div class="g"><mc-icon name="g1"></mc-icon><mc-icon name="g2"></mc-icon><mc-icon name="g3"></mc-icon><mc-icon name="b1"></mc-icon><mc-icon name="b2"></mc-icon><mc-icon name="b3"></mc-icon></div>`);

define('mc-taskbar',`<style>
:host{display:flex;height:30px;background:#1f1f1f;color:#fff;align-items:stretch}${reset}
button{width:37px;display:grid;place-items:center;box-sizing:border-box;--s:19px}
button.s{--s:14px}.u{position:relative}.u::after{content:"";position:absolute;left:3px;right:3px;bottom:0;height:2px;background:#7fa9c9}
.on{background:#484a4c}.on::after{left:0;right:0}
.t{margin-left:auto;display:flex;align-items:center}
.t button{width:18px;--s:12px;height:30px}
.w{display:flex;align-items:center;gap:8px;font-size:10px;white-space:pre;width:87px;--s:15px}
.c{width:50px;text-align:center;font-size:9px;line-height:14px;padding-bottom:1px}
.t .no{width:32px;position:relative;--s:14px;margin-right:5px}
.no b{position:absolute;right:6px;bottom:4px;width:11px;height:11px;border-radius:50%;background:#333;font-size:8px;font-weight:400;border:1px solid #555;box-sizing:border-box;line-height:9px}
.e{width:1px;height:30px;background:#555;margin-right:1px}
</style><button class="s" style="width:35px" aria-label="Start"><mc-icon name="win"></mc-icon></button><button class="s" aria-label="Search"><mc-icon name="search"></mc-icon></button><button aria-label="Store"><mc-icon name="store"></mc-icon></button><button aria-label="Files"><mc-icon name="files"></mc-icon></button><button aria-label="Mail"><mc-icon name="mail"></mc-icon></button><button style="width:38px" aria-label="Edge"><mc-icon name="edge"></mc-icon></button><button class="u" aria-label="Zoom"><mc-icon name="zoom"></mc-icon></button><button class="u on" aria-label="Mastercam"><mc-icon name="mcam"></mc-icon></button><button class="u" aria-label="Chrome"><mc-icon name="chrome"></mc-icon></button>
<div class="t"><div class="w"><mc-icon name="sun"></mc-icon><span>79°F  Sunny</span></div><button><mc-icon name="tchev"></mc-icon></button><button><mc-icon name="cam"></mc-icon></button><button><mc-icon name="mic"></mc-icon></button><button><mc-icon name="wifi"></mc-icon></button><button><mc-icon name="sound"></mc-icon></button><div class="c">5:58 PM<br>9/7/2021</div><button class="no"><mc-icon name="note"></mc-icon><b>2</b></button><div class="e"></div></div>`);

define('mc-app',`<style>
:host{display:flex;flex-direction:column;min-height:100vh;box-sizing:border-box;padding:36px 65px 10px}
main{display:flex;flex:1}time{align-self:flex-end;color:#fff;font:500 13px/16px Inter,sans-serif;padding:9px 16px 1px 0;white-space:pre}
</style><mc-titlebar></mc-titlebar><mc-tabs></mc-tabs><mc-ribbon></mc-ribbon><main><mc-levels></mc-levels><mc-viewport></mc-viewport></main><mc-status></mc-status><mc-taskbar></mc-taskbar><time>2021-09-07  17:58:41</time>`);
</script>
</body>
</html>
